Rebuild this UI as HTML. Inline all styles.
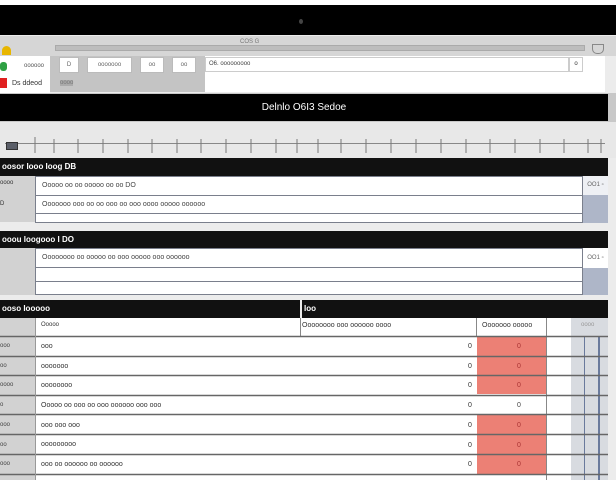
<!DOCTYPE html>
<html><head><style>
*{margin:0;padding:0;box-sizing:border-box}
body{width:616px;height:480px;overflow:hidden;background:#ececec;font-family:"Liberation Sans",sans-serif;font-size:8px;color:#333;position:relative}
.a{position:absolute}
.blk{background:#111;color:#fff;font-weight:bold;font-size:8px;padding-left:2px;line-height:17px}
.w{background:#fff;border:1px solid #7a7f8c}
.t{font-size:7px;color:#444;padding-left:6px}
.btn{background:#fff;border:1px solid #bbb;font-size:6px;color:#666;text-align:center;line-height:14px}
</style></head><body>
<div class="a" style="left:0;top:0;width:616px;height:5px;background:#fff"></div>
<div class="a" style="left:0;top:5px;width:616px;height:30px;background:#000"></div>
<div class="a" style="left:299px;top:19px;width:4px;height:5px;border-radius:50%;background:#444"></div>
<div class="a" style="left:0;top:36px;width:616px;height:20px;background:#d6d6d6"></div>
<div class="a" style="left:2px;top:46px;width:9px;height:9px;border-radius:50% 50% 0 0;background:#e8b600"></div>
<div class="a" style="left:55px;top:45px;width:530px;height:6px;background:#bdbdbd;border:1px solid #aaa"></div>
<div class="a" style="left:240px;top:39px;font-size:6px;color:#777">COS G</div>
<div class="a" style="left:592px;top:44px;width:12px;height:10px;border:1px solid #888;border-radius:0 0 5px 5px"></div>
<div class="a" style="left:0;top:56px;width:50px;height:38px;background:#fff"></div>
<div class="a" style="left:0;top:62px;width:7px;height:9px;background:#2ea043;border-radius:3px"></div>
<div class="a" style="left:0;top:78px;width:7px;height:10px;background:#e02020"></div>
<div class="a" style="left:24px;top:63px;font-size:6px;color:#555">oooooo</div>
<div class="a" style="left:12px;top:80px;font-size:7px;color:#333">Ds ddeod</div>
<div class="a" style="left:50px;top:56px;width:155px;height:36px;background:#c4c4c4"></div>
<div class="a btn" style="left:59px;top:57px;width:20px;height:16px">D</div>
<div class="a btn" style="left:87px;top:57px;width:45px;height:16px">ooooooo</div>
<div class="a btn" style="left:140px;top:57px;width:24px;height:16px">oo</div>
<div class="a btn" style="left:172px;top:57px;width:24px;height:16px">oo</div>
<div class="a" style="left:60px;top:80px;font-size:6px;color:#777;background:#aaa">oooo</div>
<div class="a" style="left:205px;top:56px;width:400px;height:36px;background:#fff"></div>
<div class="a" style="left:205px;top:57px;width:364px;height:15px;border:1px solid #ccc;font-size:6px;line-height:13px;padding-left:3px;color:#444">O6. ooooooooo</div>
<div class="a" style="left:569px;top:57px;width:14px;height:15px;border:1px solid #ccc;font-size:6px;text-align:center;line-height:13px">o</div>
<div class="a" style="left:0;top:93px;width:616px;height:29px;background:#c8c8c8"></div>
<div class="a" style="left:0;top:94px;width:608px;height:27px;background:#000;color:#fff;text-align:center;font-size:10px;line-height:27px">Delnlo O6I3 Sedoe</div>
<div class="a" style="left:0;top:122px;width:616px;height:36px;background:#e8e8e8"></div>
<div class="a" style="left:5px;top:143px;width:600px;height:10px;border-top:1px solid #888"></div>
<div class="a" style="left:6px;top:142px;width:12px;height:8px;background:#5a5e68;border:1px solid #333"></div>
<svg class="a" style="left:0;top:135px" width="616" height="20"><g stroke="#777" stroke-width="1">
<path d="M35 2V18M54 4V18M78 4V18M103 4V18M128 4V18M152 4V18M177 4V18M201 4V18M226 4V18M251 4V18M276 4V18M297 4V18M318 4V18M341 4V18M366 4V18M391 4V18M416 4V18M441 4V18M466 4V18M490 4V18M515 4V18M540 4V18M564 4V18M588 4V18M601 4V18"/></g></svg>
<div class="a blk" style="left:0;top:158px;width:608px;height:18px">oosor Iooo Ioog DB</div>
<div class="a" style="left:0;top:176px;width:36px;height:46px;background:#d2d2d2"></div>
<div class="a" style="left:0;top:180px;font-size:6px">oooo</div>
<div class="a" style="left:0;top:201px;font-size:6px">D</div>
<div class="a w t" style="left:35px;top:176px;width:548px;height:20px;line-height:18px">Ooooo oo oo ooooo oo oo DO</div>
<div class="a w t" style="left:35px;top:195px;width:548px;height:19px;line-height:17px">Ooooooo ooo oo oo ooo oo ooo oooo ooooo oooooo</div>
<div class="a w" style="left:35px;top:213px;width:548px;height:10px"></div>
<div class="a" style="left:583px;top:176px;width:25px;height:19px;background:#eef0f4;font-size:6px;line-height:19px;text-align:center;color:#666">OO1 ▫</div>
<div class="a" style="left:583px;top:195px;width:25px;height:28px;background:#aeb6c8"></div>
<div class="a blk" style="left:0;top:231px;width:608px;height:17px">ooou Ioogooo I DO</div>
<div class="a" style="left:0;top:248px;width:36px;height:47px;background:#d2d2d2"></div>
<div class="a w t" style="left:35px;top:248px;width:548px;height:20px;line-height:18px">Oooooooo oo ooooo oo ooo ooooo ooo oooooo</div>
<div class="a w" style="left:35px;top:267px;width:548px;height:15px"></div>
<div class="a w" style="left:35px;top:281px;width:548px;height:14px"></div>
<div class="a" style="left:583px;top:248px;width:25px;height:20px;background:#fff;font-size:6px;line-height:20px;text-align:center;color:#666">OO1 ▫</div>
<div class="a" style="left:583px;top:268px;width:25px;height:27px;background:#aeb6c8"></div>
<div class="a blk" style="left:0;top:300px;width:300px;height:18px">ooso Iooooo</div>
<div class="a blk" style="left:302px;top:300px;width:306px;height:18px">Ioo</div>
<div class="a" style="left:0;top:318px;width:36px;height:162px;background:#d2d2d2"></div>
<div class="a" style="left:571px;top:318px;width:37px;height:162px;background:#d8dbe0"></div>
<div class="a" style="left:584px;top:336px;width:1px;height:144px;background:#6a7a9c"></div>
<div class="a" style="left:598px;top:336px;width:2px;height:144px;background:#6a7a9c"></div>
<div class="a" style="left:35px;top:318px;width:536px;height:162px;background:#fff"></div>
<div class="a" style="left:300px;top:318px;width:1px;height:18px;background:#888"></div>
<div class="a" style="left:476px;top:318px;width:1px;height:18px;background:#888"></div>
<div class="a" style="left:546px;top:318px;width:1px;height:162px;background:#888"></div>
<div class="a" style="left:41px;top:322px;font-size:6px">Ooooo</div>
<div class="a" style="left:302px;top:322px;font-size:7px">Oooooooo ooo oooooo oooo</div>
<div class="a" style="left:482px;top:322px;font-size:7px">Ooooooo ooooo</div>
<div class="a" style="left:581px;top:322px;font-size:6px;color:#999">oooo</div>
<div class="a" style="left:477px;top:336px;width:69px;height:58px;background:#ec8075"></div>
<div class="a" style="left:477px;top:414px;width:69px;height:60px;background:#ec8075"></div>
<svg class="a" style="left:0;top:0" width="616" height="480"><g stroke="#666" stroke-width="1.5">
<path d="M0 336.5H608M0 356.5H608M0 375.5H608M0 395.5H608M0 414.5H608M0 434.5H608M0 454.5H608M0 474.5H608"/></g>
<g stroke="#999"><path d="M35.5 318V480"/></g></svg>
<div class="a" style="left:41px;top:337px;font-size:7px;line-height:20px">
<div style="height:19.7px">ooo</div><div style="height:19.7px">ooooooo</div><div style="height:19.7px">oooooooo</div><div style="height:19.7px">Ooooo oo ooo oo ooo oooooo ooo ooo</div><div style="height:19.7px">ooo ooo ooo</div><div style="height:19.7px">ooooooooo</div><div style="height:19.7px">ooo oo oooooo oo oooooo</div></div>
<div class="a" style="left:468px;top:337px;font-size:7px;line-height:19.7px">0<br>0<br>0<br>0<br>0<br>0<br>0</div>
<div class="a" style="left:517px;top:337px;font-size:7px;line-height:19.7px;color:#a33">0<br>0<br>0<br><span style="color:#444">0</span><br>0<br>0<br>0</div>
<div class="a" style="left:0;top:337px;font-size:6px;line-height:19.7px;color:#444">ooo<br>oo<br>oooo<br>o<br>ooo<br>oo<br>ooo</div>
</body></html>
